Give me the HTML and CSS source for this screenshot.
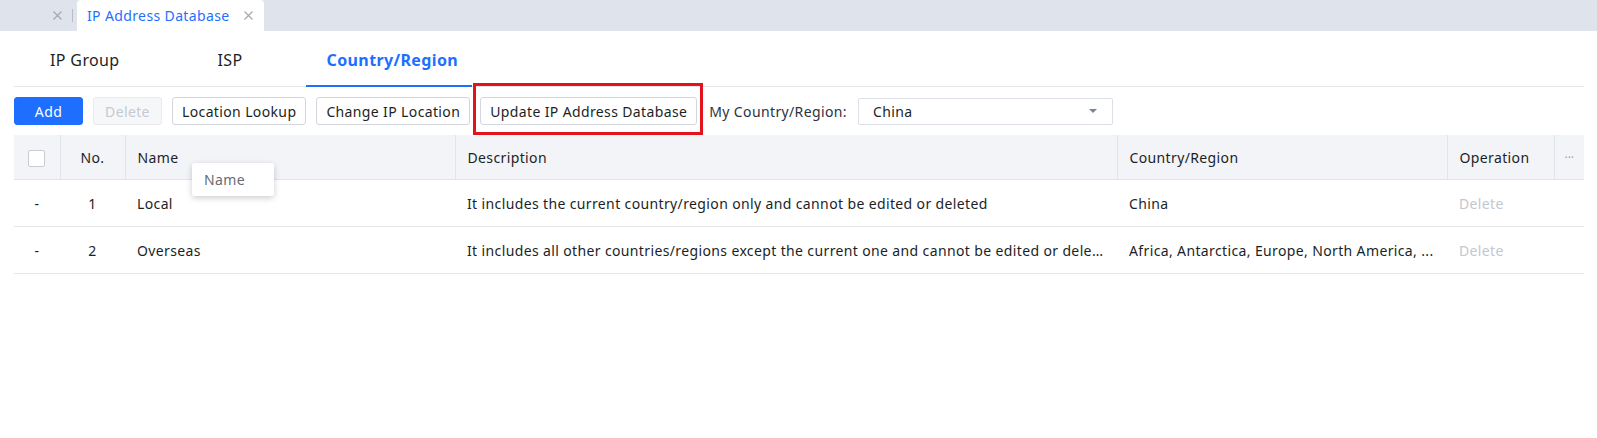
FILE: index.html
```html
<!DOCTYPE html>
<html lang="en">

<head>
    <meta charset="UTF-8">
    <title>IP Address Database</title>
    <link rel="stylesheet" href="styles.css">
</head>

<body>
    <div class="tabbar">
        <span class="tab-x">
            <svg width="9" height="9" viewBox="0 0 9 9"><path d="M0.5 0.5L8.5 8.5M8.5 0.5L0.5 8.5" stroke="#a3a9b5" stroke-width="1.2" /></svg>
        </span>
        <span class="tab-sep"></span>
        <div class="pagetab">
            <span>IP Address Database</span>
            <span class="tab-x">
                <svg width="9" height="9" viewBox="0 0 9 9"><path d="M0.5 0.5L8.5 8.5M8.5 0.5L0.5 8.5" stroke="#a3a9b5" stroke-width="1.2" /></svg>
            </span>
        </div>
    </div>

    <div class="main">
        <nav class="subtabs">
            <a class="subtab">IP Group</a>
            <a class="subtab isp">ISP</a>
            <a class="subtab valgt">Country/Region</a>
        </nav>

        <div class="toolbar">
            <button class="btn primary">Add</button>
            <button class="btn disabled">Delete</button>
            <button class="btn">Location Lookup</button>
            <button class="btn">Change IP Location</button>
            <span class="markbox"><button class="btn">Update IP Address Database</button></span>
            <label class="lbl">My Country/Region:</label>
            <div class="select">
                <span>China</span>
                <span class="caret"></span>
            </div>
        </div>

        <div class="tablewrap">
            <table class="grid">
                <colgroup>
                    <col style="width:46px">
                    <col style="width:65px">
                    <col style="width:330px">
                    <col style="width:662px">
                    <col style="width:330px">
                    <col style="width:107px">
                    <col style="width:30px">
                </colgroup>
                <thead>
                    <tr>
                        <th class="center"><span class="check"></span></th>
                        <th class="center">No.</th>
                        <th>Name</th>
                        <th>Description</th>
                        <th>Country/Region</th>
                        <th>Operation</th>
                        <th class="center more">···</th>
                    </tr>
                </thead>
                <tbody>
                    <tr>
                        <td class="center">-</td>
                        <td class="center">1</td>
                        <td>Local</td>
                        <td>It includes the current country/region only and cannot be edited or deleted</td>
                        <td>China</td>
                        <td class="off">Delete</td>
                        <td></td>
                    </tr>
                    <tr>
                        <td class="center">-</td>
                        <td class="center">2</td>
                        <td>Overseas</td>
                        <td>It includes all other countries/regions except the current one and cannot be edited or deleted</td>
                        <td>Africa, Antarctica, Europe, North America, ...</td>
                        <td class="off">Delete</td>
                        <td></td>
                    </tr>
                </tbody>
            </table>
            <div class="tip">Name</div>
        </div>
    </div>
</body>

</html>
```

FILE: styles.css
```css
body {
    margin: 0;
    font-family: "Noto Sans", "Open Sans", sans-serif;
    font-size: 14px;
    letter-spacing: 0.37px;
    color: #1b1f26;
    background-color: white;
}

/* top page tabs */
.tabbar {
    height: 31px;
    background-color: #dfe3ec;
    display: flex;
    align-items: flex-end;
    padding-left: 53px;
}

.tab-x {
    display: flex;
    width: 9px;
    height: 9px;
}

.tabbar > .tab-x {
    align-self: center;
}

.tab-sep {
    align-self: center;
    width: 1px;
    height: 13px;
    background-color: #b8bdc8;
    margin: 0 4px 0 10px;
}

.pagetab {
    height: 31px;
    width: 187px;
    box-sizing: border-box;
    background-color: white;
    border-radius: 4px 4px 0 0;
    display: flex;
    align-items: center;
    justify-content: space-between;
    padding: 0 11px 0 10px;
    color: #1e6fff;
}

.main {
    padding: 0 13px 0 14px;
}

/* sub tabs */
.subtabs {
    display: flex;
    gap: 48px;
    height: 55px;
    padding-left: 14px;
    border-bottom: 1px solid #e4e6ec;
}

.subtab {
    position: relative;
    padding: 3px 22px 0;
    display: flex;
    align-items: center;
    font-size: 16px;
    color: #1b1f26;
}

.subtab.isp {
    padding: 3px 15px 0 28px;
}

.subtab.valgt {
    padding: 3px 14px 0 21px;
    color: #1e6fff;
    font-weight: bold;
}

.subtab.valgt::after {
    content: "";
    position: absolute;
    left: 0;
    right: 0;
    bottom: -1px;
    height: 2px;
    background-color: #1e6fff;
}

/* toolbar */
.toolbar {
    display: flex;
    align-items: center;
    gap: 10px;
    padding: 10px 0;
}

.btn {
    height: 28px;
    padding: 0 9px;
    font-family: inherit;
    font-size: 14px;
    letter-spacing: inherit;
    color: #1b1f26;
    background-color: white;
    border: 1px solid #d3d6dd;
    border-radius: 3px;
}

.btn.primary {
    width: 69px;
    background-color: #1e6fff;
    border-color: #1e6fff;
    color: white;
}

.btn.disabled {
    width: 69px;
    background-color: #f6f7f9;
    border-color: #e8eaee;
    color: #c5c9d1;
}

.markbox {
    position: relative;
    display: flex;
}

.markbox::after {
    content: "";
    position: absolute;
    top: -14px;
    left: -7px;
    right: -6px;
    bottom: -10px;
    border: 3px solid #e3121d;
}

.lbl {
    margin-left: 2px;
    color: #2b3340;
}

.select {
    width: 255px;
    height: 27px;
    box-sizing: border-box;
    margin-left: 1px;
    border: 1px solid #dcdfe6;
    border-radius: 2px;
    display: flex;
    align-items: center;
    justify-content: space-between;
    padding: 0 15px 0 14px;
}

.caret {
    width: 0;
    height: 0;
    border-left: 4px solid transparent;
    border-right: 4px solid transparent;
    border-top: 4px solid #7c8493;
}

/* table */
.tablewrap {
    position: relative;
}

.grid {
    width: 1570px;
    table-layout: fixed;
    border-collapse: collapse;
}

.grid th {
    height: 44px;
    padding: 0 11px 0 12px;
    text-align: left;
    font-weight: normal;
    background-color: #f3f4f8;
    border-right: 1px solid #e2e4eb;
    border-bottom: 1px solid #e2e4eb;
    white-space: nowrap;
}

.grid th:last-child {
    border-right: none;
}

.grid td {
    height: 46px;
    padding: 0 11px 0 12px;
    border-bottom: 1px solid #e4e6ec;
    white-space: nowrap;
    overflow: hidden;
    text-overflow: ellipsis;
}

.grid .center {
    text-align: center;
    padding: 0;
}

.grid .more {
    color: #a0a5ae;
    font-size: 12px;
    letter-spacing: 0;
}

.grid .off {
    color: #c3c7ce;
}

.check {
    display: inline-block;
    width: 17px;
    height: 17px;
    box-sizing: border-box;
    border: 1px solid #c8ccd3;
    border-radius: 2px;
    background-color: white;
    vertical-align: middle;
}

.tip {
    position: absolute;
    left: 178px;
    top: 28px;
    width: 82px;
    height: 33px;
    box-sizing: border-box;
    padding: 0 12px;
    display: flex;
    align-items: center;
    background-color: white;
    color: #666b75;
    border-radius: 2px;
    box-shadow: 0 2px 6px rgba(0, 0, 0, .2);
}
```
